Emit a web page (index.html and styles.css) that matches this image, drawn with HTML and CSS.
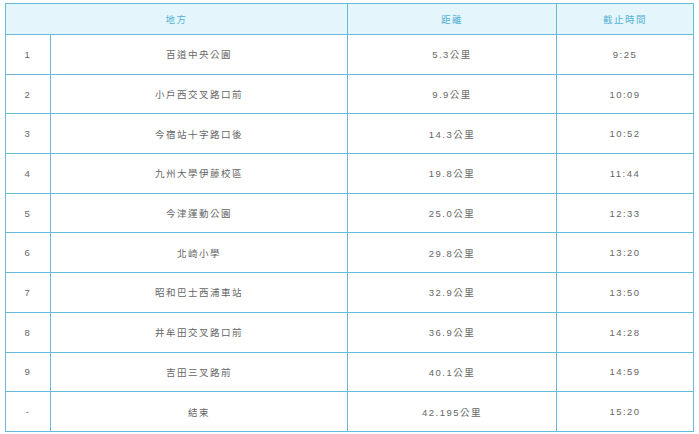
FILE: index.html
```html
<!DOCTYPE html>
<html lang="zh-Hant">
<head>
<meta charset="utf-8">
<link rel="stylesheet" href="styles.css">
</head>
<body>
<div class="wrap">
<table class="route">
  <colgroup>
    <col class="c-no"><col class="c-place"><col class="c-dist"><col class="c-time">
  </colgroup>
  <thead>
    <tr><th colspan="2">地方</th><th>距離</th><th>截止時間</th></tr>
  </thead>
  <tbody>
    <tr><td>1</td><td>百道中央公園</td><td>5.3公里</td><td>9:25</td></tr>
    <tr><td>2</td><td>小戶西交叉路口前</td><td>9.9公里</td><td>10:09</td></tr>
    <tr><td>3</td><td>今宿站十字路口後</td><td>14.3公里</td><td>10:52</td></tr>
    <tr><td>4</td><td>九州大學伊藤校區</td><td>19.8公里</td><td>11:44</td></tr>
    <tr><td>5</td><td>今津運動公園</td><td>25.0公里</td><td>12:33</td></tr>
    <tr><td>6</td><td>北崎小學</td><td>29.8公里</td><td>13:20</td></tr>
    <tr><td>7</td><td>昭和巴士西浦車站</td><td>32.9公里</td><td>13:50</td></tr>
    <tr><td>8</td><td>井牟田交叉路口前</td><td>36.9公里</td><td>14:28</td></tr>
    <tr><td>9</td><td>吉田三叉路前</td><td>40.1公里</td><td>14:59</td></tr>
    <tr><td>-</td><td>結束</td><td>42.195公里</td><td>15:20</td></tr>
  </tbody>
</table>
</div>
</body>
</html>
```
FILE: styles.css
```css
html, body {
  margin: 0;
  padding: 0;
  background: #ffffff;
}
.wrap {
  padding: 3px 0 0 5px;
}
.route {
  width: 688px;
  border-collapse: collapse;
  table-layout: fixed;
  font-family: "Liberation Sans", "Noto Sans CJK TC", sans-serif;
  font-size: 9.5px;
  letter-spacing: 1.5px;
  color: #666666;
}
.c-no { width: 45px; }
.c-place { width: 297px; }
.c-dist { width: 209px; }
.c-time { width: 137px; }
.route th,
.route td {
  border: 1px solid #66bbd9;
  text-align: center;
  vertical-align: middle;
  padding: 0;
}
.route th {
  height: 30px;
  background: #e4f6fc;
  color: #55b2d6;
  font-weight: normal;
}
.route td {
  height: 38.7px;
}
```
